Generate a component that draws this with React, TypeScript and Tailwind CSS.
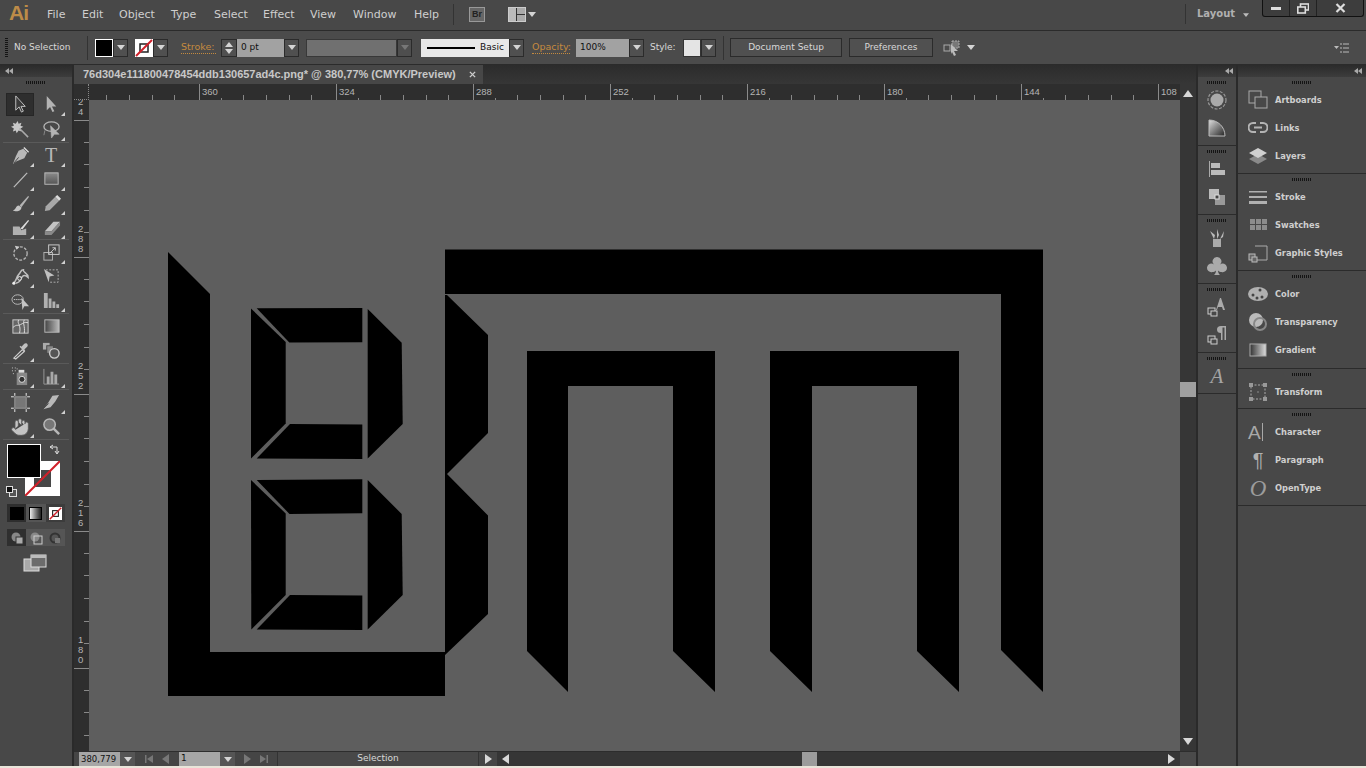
import type { ReactNode } from 'react'
import { Hand } from 'lucide-react'

const UI = 'font-["DejaVu_Sans",sans-serif]'

function Caret({ color = '#d4d4d4' }: { color?: string }) {
  return (
    <svg viewBox="0 0 8 5" className="w-2 h-[5px]">
      <path d="M0 0h8L4 5z" fill={color} />
    </svg>
  )
}

function Grip({ className = '' }: { className?: string }) {
  return <div className={`w-5 h-[3px] bg-[repeating-linear-gradient(90deg,#141414_0_1px,transparent_1px_2px)] ${className}`} />
}

function DropBtn() {
  return (
    <div className="w-[15px] h-[18px] shrink-0 flex items-center justify-center bg-[#505050] border border-[#2b2b2b]">
      <Caret />
    </div>
  )
}

function VDivider({ className = '' }: { className?: string }) {
  return <div className={`w-px bg-[#333] ${className}`} />
}

function OrangeLabel({ children, className = '' }: { children: ReactNode; className?: string }) {
  return <span className={`text-[9.5px] text-[#c48a3f] border-b border-dotted border-[#c48a3f] leading-[12px] ${className}`}>{children}</span>
}

function NoneSwatch({ className = '' }: { className?: string }) {
  return (
    <svg viewBox="0 0 18 18" className={className}>
      <rect width="18" height="18" fill="#fff" />
      <rect x="5" y="5" width="8" height="8" fill="none" stroke="#222" strokeWidth="1.5" />
      <path d="M1 17L17 1" stroke="#d0202a" strokeWidth="2" />
    </svg>
  )
}

function ControlBar() {
  return (
    <div className="h-[35px] flex items-center bg-[#4b4b4b] border-y border-[#2b2b2b] text-[#d8d8d8] text-[9px]">
      <div className="ml-[5px] w-[3px] h-[19px] bg-[repeating-linear-gradient(180deg,#141414_0_1px,transparent_1px_2px)]" />
      <span className="ml-[6px] w-[73px]">No Selection</span>
      <VDivider className="h-6" />
      <div className="ml-[7px] w-[18px] h-[18px] border border-white bg-black" />
      <DropBtn />
      <NoneSwatch className="ml-[7px] w-[18px] h-[18px]" />
      <DropBtn />
      <OrangeLabel className="ml-[13px] w-[35px]">Stroke:</OrangeLabel>
      <div className="ml-[5px] w-[16px] h-[18px] flex flex-col items-center justify-center gap-[2px] bg-[#505050] border border-[#2b2b2b]">
        <svg viewBox="0 0 8 5" className="w-2 h-[5px]"><path d="M0 5h8L4 0z" fill="#d4d4d4" /></svg>
        <Caret />
      </div>
      <div className="w-[47px] h-[18px] pl-[4px] flex items-center bg-[#a2a2a2] text-[#111]">0 pt</div>
      <DropBtn />
      <div className="ml-[7px] w-[91px] h-[18px] bg-[#707070] border border-[#383838]" />
      <div className="w-[15px] h-[18px] flex items-center justify-center bg-[#4e4e4e] border border-[#2b2b2b]"><Caret color="#777" /></div>
      <div className="ml-[9px] w-[88px] h-[18px] flex items-center bg-[#e8e8e8] text-[#111]">
        <div className="ml-[6px] w-[48px] h-[2px] bg-black" />
        <span className="ml-[5px]">Basic</span>
      </div>
      <DropBtn />
      <OrangeLabel className="ml-[8px] w-[38px]">Opacity:</OrangeLabel>
      <div className="ml-[6px] w-[53px] h-[18px] pl-[4px] flex items-center bg-[#a2a2a2] text-[#111]">100%</div>
      <DropBtn />
      <span className="ml-[6px] w-[33px]">Style:</span>
      <div className="w-[18px] h-[18px] bg-[#e4e4e4] border border-[#333]" />
      <DropBtn />
      <VDivider className="ml-[7px] h-6" />
      <div className="ml-[6px] w-[112px] h-[19px] flex items-center justify-center bg-[#505050] border border-[#2b2b2b]">Document Setup</div>
      <div className="ml-[7px] w-[84px] h-[19px] flex items-center justify-center bg-[#505050] border border-[#2b2b2b]">Preferences</div>
      <svg viewBox="0 0 18 16" className="ml-[10px] w-[18px] h-4">
        <rect x="1" y="5" width="6" height="6" fill="none" stroke="#aaa" />
        <rect x="9" y="1" width="7" height="7" fill="#777" stroke="#aaa" strokeDasharray="2 1" />
        <path d="M8 4l7 7h-4l2 4-2 1-2-4-1 2z" fill="#bbb" />
      </svg>
      <div className="ml-[6px]"><Caret /></div>
      <svg viewBox="0 0 15 10" className="ml-auto mr-[17px] w-[15px] h-[10px]">
        <path d="M0 3h5L2.5 6z" fill="#bbb" />
        <path d="M6 1h2M6 5h2M6 9h2M9 1h6M9 5h6M9 9h6" stroke="#bbb" />
      </svg>
    </div>
  )
}

function MenuBar() {
  const items = [
    { label: 'File', w: 'w-[35px]' },
    { label: 'Edit', w: 'w-[37px]' },
    { label: 'Object', w: 'w-[52px]' },
    { label: 'Type', w: 'w-[43px]' },
    { label: 'Select', w: 'w-[49px]' },
    { label: 'Effect', w: 'w-[47px]' },
    { label: 'View', w: 'w-[43px]' },
    { label: 'Window', w: 'w-[61px]' },
    { label: 'Help', w: 'w-[39px]' },
  ]
  return (
    <div className="h-[30px] flex items-start bg-[#484848] text-[11px] text-[#cfcfcf]">
      <span className='ml-[9px] w-[38px] h-[26px] flex items-center text-[21px] font-bold tracking-[-1px] text-[#bd8c48] font-["Liberation_Sans",sans-serif]'>Ai</span>
      {items.map((item) => (
        <span key={item.label} className={`${item.w} h-[30px] leading-[30px]`}>{item.label}</span>
      ))}
      <VDivider className="mt-1 h-[21px]" />
      <div className='ml-[15px] mt-[7px] w-4 h-[15px] flex items-center justify-center bg-[#666] border border-[#999] text-[9px] font-bold text-[#222] font-["Liberation_Sans",sans-serif]'>Br</div>
      <div className="ml-[23px] mt-[7px] w-[18px] h-[15px] flex border border-[#ccc] bg-[#aaa]">
        <div className="w-[8px] h-full border-r border-[#333] bg-[#bbb]" />
        <div className="flex-1 flex flex-col">
          <div className="flex-1 border-b border-[#333]" />
          <div className="flex-1" />
        </div>
      </div>
      <div className="ml-[2px] mt-[12px]"><Caret /></div>
      <VDivider className="ml-[649px] mt-1 h-[20px]" />
      <span className="ml-[11px] w-[46px] h-[28px] leading-[28px] font-bold text-[10px] text-[#b0b0b0]">Layout</span>
      <div className="mt-[13px]"><svg viewBox="0 0 8 5" className="w-[6px] h-1"><path d="M0 0h8L4 5z" fill="#bbb" /></svg></div>
      <div className="ml-[13px] w-[102px] h-[17px] flex bg-[#3d3d3d] border-x border-b border-[#111] rounded-b-[3px]">
        <div className="w-[27px] flex items-center justify-center border-r border-[#222]"><div className="w-[10px] h-[3px] bg-[#ddd]" /></div>
        <div className="w-[27px] flex items-center justify-center border-r border-[#222]">
          <svg viewBox="0 0 12 11" className="w-3 h-[11px]">
            <rect x="3.5" y="1" width="8" height="6" fill="none" stroke="#ddd" strokeWidth="1.6" />
            <rect x="0.8" y="4" width="7.5" height="6" fill="#3d3d3d" stroke="#ddd" strokeWidth="1.6" />
          </svg>
        </div>
        <div className="flex-1 flex items-center justify-center">
          <svg viewBox="0 0 10 10" className="w-[11px] h-[10px]"><path d="M1 1l8 8M9 1l-8 8" stroke="#ddd" strokeWidth="2.2" /></svg>
        </div>
      </div>
    </div>
  )
}

const toolIcons: Record<string, ReactNode> = {
  select: <path d="M5 1v15l3.5-3.5L11 18l2-1-2.5-5H15z" fill="#3a3a3a" stroke="#c4c4c4" />,
  direct: <path d="M5 1v15l3.5-3.5L11 18l2-1-2.5-5H15z" fill="#b4b4b4" />,
  wand: <><path d="M7 1l1 3 3-1-1 3 3 1-3 2 1 3-3-1-2 3-1-3-3 1 1-3-3-2 3-1-1-3 3 1z" fill="#c8c8c8" /><path d="M9 9l9 9" stroke="#aaa" strokeWidth="1.6" /></>,
  lasso: <><ellipse cx="10" cy="7" rx="8" ry="5" fill="none" stroke="#b4b4b4" strokeWidth="1.4" /><path d="M3 11l-1 5M9 6l9 9h-5l-3 4z" fill="#b4b4b4" stroke="#b4b4b4" strokeWidth="0.6" /></>,
  pen: <><path d="M13 3l4 4-3 6-8 3-4 3 3-8 3-6z" fill="#b8b8b8" /><path d="M14 1l5 5-1 1-5-5z" fill="#ddd" /><path d="M3 18l5-6" stroke="#444" /></>,
  line: <path d="M3 18L17 3" stroke="#bcbcbc" strokeWidth="1.3" />,
  rect: <><defs><linearGradient id="rg" x1="0" y1="0" x2="0" y2="1"><stop offset="0" stopColor="#8a8a8a" /><stop offset="1" stopColor="#555" /></linearGradient></defs><rect x="3" y="3" width="14" height="12" fill="url(#rg)" stroke="#bbb" /></>,
  brush: <><path d="M18 2L9 12l2 2L19 3z" fill="#b4b4b4" /><path d="M8 12c-3 0-3 5-6 5 2 2 9 2 9-3z" fill="#c4c4c4" /></>,
  pencil: <><path d="M14 3l4 4-10 10-5 1 1-5z" fill="#a8a8a8" /><path d="M14 3l2-2 4 4-2 2z" fill="#ddd" /></>,
  blob: <><path d="M2 9h7l2 4 5-2v7H2z" fill="#b0b0b0" /><path d="M10 11l8-9 1 1-7 9z" fill="#ddd" /></>,
  eraser: <><path d="M3 14l9-10h7l-9 10z" fill="#c4c4c4" /><path d="M3 14h7v4H3zM10 14l9-10v4l-9 10z" fill="#8a8a8a" /></>,
  rotate: <><circle cx="10" cy="11" r="7" fill="none" stroke="#b4b4b4" strokeWidth="1.4" strokeDasharray="3 1.6" /><path d="M4 3l5 1-3 3z" fill="#ccc" /></>,
  scale: <><rect x="2" y="10" width="9" height="8" fill="none" stroke="#b4b4b4" /><rect x="7" y="2" width="11" height="10" fill="none" stroke="#ccc" /><path d="M8 11l6-6M11 5h3v3" fill="none" stroke="#ccc" /></>,
  warp: <><path d="M2 17c4-1 3-6 6-9s2-5 5-5c-1 3 5 3 5 8-2-2-4-3-6-1s-1 6-7 7" fill="none" stroke="#c0c0c0" strokeWidth="1.6" /><circle cx="9" cy="12" r="2" fill="#555" stroke="#eee" /><circle cx="3" cy="17" r="1.6" fill="#eee" /></>,
  free: <><path d="M4 3h13v13H8" fill="none" stroke="#b0b0b0" strokeDasharray="2 1.6" /><path d="M2 2l11 7-5 1-1 6z" fill="#c0c0c0" /></>,
  shape: <><ellipse cx="7" cy="9" rx="6" ry="5" fill="none" stroke="#bbb" /><path d="M3 9h9" stroke="#eee" strokeDasharray="1 1" /><path d="M11 7l8 9h-5l-2 4z" fill="#c4c4c4" /></>,
  graph: <path d="M2 2h4v16H2zM7 8h3v10H7zM11 11h3v7h-3zM15 14h3v4h-3z" fill="#b0b0b0" />,
  mesh: <><rect x="2" y="3" width="16" height="14" fill="#666" stroke="#ccc" /><path d="M2 11c5-4 4-1 8-3s4-3 8-2M8 3c-2 4 3 5 1 14M14 3c-2 4 1 6 0 14" fill="none" stroke="#ddd" /></>,
  gradient: <><defs><linearGradient id="gg"><stop offset="0" stopColor="#444" /><stop offset="1" stopColor="#bbb" /></linearGradient></defs><rect x="3" y="3" width="15" height="13" fill="url(#gg)" stroke="#bbb" /></>,
  dropper: <><path d="M3 18l9-9 2 2-9 8z" fill="none" stroke="#ccc" strokeWidth="1.3" /><path d="M11 6l3-3c2-2 5 1 3 3l-3 3 1 1-1 1-5-5 1-1z" fill="#c0c0c0" /></>,
  blend: <><rect x="1" y="2" width="7" height="7" fill="#aaa" /><rect x="5" y="5" width="7" height="8" fill="#888" stroke="#444" /><circle cx="13" cy="13" r="5" fill="#555" stroke="#ccc" strokeWidth="1.5" /></>,
  spray: <><rect x="6" y="6" width="11" height="13" fill="#888" /><circle cx="11.5" cy="13" r="3.2" fill="#333" stroke="#ddd" /><rect x="8" y="3" width="6" height="3" fill="#ddd" /><path d="M1 1h1M4 1h1M1 4h1M4 4h1M2 7h1M6 2h1" stroke="#ccc" /></>,
  column: <><path d="M2 2v16h16" fill="none" stroke="#999" /><path d="M5 10h3v8H5zM9 5h3v13H9zM13 8h3v10h-3z" fill="#a8a8a8" /></>,
  artboard: <><rect x="4" y="4" width="12" height="12" fill="#777" stroke="#999" /><path d="M0 4h3M17 4h3M0 16h3M17 16h3M4 0v3M4 17v3M16 0v3M16 17v3" stroke="#eee" /></>,
  slice: <><path d="M18 2l-7 1-5 8-5 6 8-2 5-6z" fill="#b8b8b8" /><path d="M1 17l6-6" stroke="#444" /></>,
  hand: null,
  zoom: <><circle cx="8" cy="8" r="6" fill="#777" stroke="#b8b8b8" strokeWidth="1.6" /><path d="M12 12l6 6" stroke="#b8b8b8" strokeWidth="2.6" /></>,
}

function ToolCell({ name, flyout = true, active = false }: { name: string; flyout?: boolean; active?: boolean }) {
  return (
    <div className={`relative w-[28px] h-[23px] flex items-center justify-center ${active ? 'bg-[#2e2e2e] border border-[#262626]' : ''}`}>
      {name === 'type' ? (
        <span className='text-[20px] leading-none text-[#b8b8b8] font-["Liberation_Serif",serif]'>T</span>
      ) : name === 'hand' ? (
        <Hand className="w-5 h-5 text-[#555]" fill="#c4c4c4" strokeWidth={1} />
      ) : (
        <svg viewBox="0 0 20 20" className="w-[19px] h-[19px]">{toolIcons[name]}</svg>
      )}
      {flyout && !active && <div className="absolute right-0 bottom-0 w-0 h-0 border-l-[4px] border-l-transparent border-b-[4px] border-b-[#d0d0d0]" />}
    </div>
  )
}

function ToolGroup({ rows, className }: { rows: [string, string][]; className: string }) {
  const noFlyout = ['wand', 'free', 'mesh', 'gradient', 'blend', 'artboard', 'zoom', 'select']
  return (
    <div className={`${className} flex flex-col justify-around border-b border-[#5a5a5a] mx-[3px] box-content`}>
      {rows.map(([a, b]) => (
        <div key={a} className="flex justify-between pl-[3px] pr-[4px]">
          <ToolCell name={a} flyout={!noFlyout.includes(a)} active={a === 'select'} />
          <ToolCell name={b} flyout={!noFlyout.includes(b)} />
        </div>
      ))}
    </div>
  )
}

function ModeCell({ children, className = '' }: { children: ReactNode; className?: string }) {
  return <div className={`flex-1 flex items-center justify-center ${className}`}>{children}</div>
}

function DockHeader({ className = '' }: { className?: string }) {
  return (
    <div className={`h-[12px] flex items-center bg-gradient-to-b from-[#2b2b2b] to-[#3c3c3c] ${className}`}>
      <svg viewBox="0 0 8 6" className="w-2 h-[6px] shrink-0">
        <path d="M4 0v6L0 3zM8 0v6L4 3z" fill="#aaa" />
      </svg>
    </div>
  )
}

function LeftToolbar() {
  return (
    <div className="w-[74px] shrink-0 flex flex-col bg-[#484848] border-r-2 border-[#2a2a2a]">
      <DockHeader className="pl-[5px]" />
      <div className="h-[15px] pt-[4px] flex justify-center"><Grip /></div>
      <ToolGroup className="h-[50px]" rows={[['select', 'direct'], ['wand', 'lasso']]} />
      <ToolGroup className="h-[96px]" rows={[['pen', 'type'], ['line', 'rect'], ['brush', 'pencil'], ['blob', 'eraser']]} />
      <ToolGroup className="h-[73px]" rows={[['rotate', 'scale'], ['warp', 'free'], ['shape', 'graph']]} />
      <ToolGroup className="h-[49px]" rows={[['mesh', 'gradient'], ['dropper', 'blend']]} />
      <ToolGroup className="h-[25px]" rows={[['spray', 'column']]} />
      <ToolGroup className="h-[49px]" rows={[['artboard', 'slice'], ['hand', 'zoom']]} />

      <div className="relative h-[60px] mt-[4px] mx-[6px]">
        <div className="absolute left-[19px] top-[17px] w-[35px] h-[35px] bg-white">
          <div className="absolute left-[9px] top-[9px] w-[17px] h-[17px] bg-[#474747]" />
          <svg viewBox="0 0 35 35" className="absolute inset-0 w-[35px] h-[35px]"><path d="M0 35L35 0" stroke="#d0202a" strokeWidth="2" /></svg>
        </div>
        <div className="absolute left-[1px] top-0 w-[34px] h-[34px] bg-black border border-white" />
        <svg viewBox="0 0 12 12" className="absolute left-[43px] top-0 w-[12px] h-[12px]">
          <path d="M1 3h7v6M1 3l3-2M1 3l3 2M8 10l-2-3M8 10l2-3" fill="none" stroke="#ddd" />
        </svg>
        <div className="absolute left-0 top-[42px] w-[11px] h-[11px]">
          <div className="absolute right-0 bottom-0 w-[8px] h-[8px] bg-[#555] border border-[#ddd]" />
          <div className="absolute left-0 top-0 w-[7px] h-[7px] bg-[#111] border border-[#ddd]" />
        </div>
      </div>

      <div className="mx-[7px] h-[18px] flex bg-[#333]">
        <ModeCell className="bg-[#2e2e2e]"><div className="w-[14px] h-[13px] bg-black" /></ModeCell>
        <ModeCell className="bg-[#555]"><div className="w-[13px] h-[13px] border border-black bg-gradient-to-r from-[#eee] to-[#222]" /></ModeCell>
        <ModeCell className="bg-[#3c3c3c]"><NoneSwatch className="w-[13px] h-[13px]" /></ModeCell>
      </div>
      <div className="mx-[7px] mt-[7px] h-[17px] flex bg-[#333]">
        <ModeCell className="bg-[#2f2f2f]">
          <svg viewBox="0 0 14 14" className="w-[14px] h-[14px]"><circle cx="6" cy="6" r="4.5" fill="#888" /><rect x="6" y="6" width="7" height="7" fill="#aaa" stroke="#333" /></svg>
        </ModeCell>
        <ModeCell className="bg-[#555]">
          <svg viewBox="0 0 14 14" className="w-[14px] h-[14px]"><circle cx="6" cy="6" r="4.5" fill="#888" /><rect x="5" y="5" width="8" height="8" fill="none" stroke="#ccc" /></svg>
        </ModeCell>
        <ModeCell className="bg-[#555]">
          <svg viewBox="0 0 14 14" className="w-[14px] h-[14px]"><circle cx="7" cy="7" r="4.5" fill="none" stroke="#333" strokeWidth="2" /><rect x="7" y="7" width="5" height="5" fill="#777" /></svg>
        </ModeCell>
      </div>
      <div className="mt-[8px] ml-[23px]">
        <svg viewBox="0 0 24 18" className="w-6 h-[18px]">
          <rect x="1" y="5" width="15" height="12" fill="#a8a8a8" stroke="#ddd" />
          <rect x="8" y="1" width="15" height="12" fill="#6c6c6c" stroke="#ddd" />
          <rect x="8" y="1" width="15" height="3" fill="#bbb" />
        </svg>
      </div>
    </div>
  )
}

function HRulerCell({ label }: { label: string }) {
  return (
    <div className="relative w-[137px] shrink-0 h-full grid grid-cols-6 border-l border-[#8a8a8a]">
      <span className='absolute left-[2px] top-[2px] text-[9.5px] leading-[12px] text-[#b4b4b4] font-["Liberation_Sans",sans-serif]'>{label}</span>
      {[0, 1, 2, 3, 4, 5].map((i) => (
        <div key={i} className="flex items-end justify-end pr-px">
          {i < 5 && <div className={`w-px bg-[#888] ${i === 0 ? 'h-[2px]' : 'h-[5px]'}`} />}
        </div>
      ))}
    </div>
  )
}

function VRulerCell({ label }: { label: string }) {
  return (
    <div className="relative h-[137px] shrink-0 grid grid-rows-6 border-b border-[#8a8a8a]">
      <div className='absolute left-[4px] bottom-[3px] flex flex-col text-[9.5px] leading-[10px] text-[#b4b4b4] font-["Liberation_Sans",sans-serif]'>
        {label.split('').map((d, i) => <span key={i}>{d}</span>)}
      </div>
      {[0, 1, 2, 3, 4, 5].map((i) => (
        <div key={i} className="flex flex-col justify-end items-end pb-px">
          {i < 5 && <div className="h-px w-[5px] bg-[#888]" />}
        </div>
      ))}
    </div>
  )
}

function Logo() {
  const polys = [
    '168,252 210,294 210,652 445,652 445,696 168,696',
    '445,249.5 1043,249.5 1043,692 1001,650 1001,294 445,294',
    '445,295 447,295 488,335 488,433 447,474 488,515.5 488,614 445,655',
    '251,308.5 285.7,342 285.7,423.5 251,458.5',
    '256.7,308.3 362.3,308 362.3,342.3 289.3,342.6',
    '290,424 362.3,424.5 362.3,459 256.7,458.5',
    '367.7,309 401.7,342.7 402.7,424 367.7,458.5',
    '251,480 285.7,513.5 285.7,595 251.3,629.5',
    '256.7,480 362.3,479.3 362.3,513.3 289.5,514',
    '290,595 362.3,595.5 362.3,630 256.7,629.5',
    '367.7,480 401.7,514 402.7,595 367.7,629.5',
    '527,351 715,351 715,692 673,651 673,386 568,386 568,692 527,651',
    '770,351 959,351 959,692 917,651 917,386 812,386 812,692 770,651',
  ]
  return (
    <svg viewBox="89 100 1091 651" className="block w-[1091px] h-[651px]">
      {polys.map((p) => <polygon key={p} points={p} fill="#000" />)}
    </svg>
  )
}

function Arrow({ dir, color = '#d8d8d8' }: { dir: 'up' | 'down' | 'left' | 'right'; color?: string }) {
  const d = { up: 'M0 7h10L5 0z', down: 'M0 0h10L5 7z', left: 'M7 0v10L0 5z', right: 'M0 0v10l7-5z' }[dir]
  const size = dir === 'up' || dir === 'down' ? 'w-[10px] h-[7px]' : 'w-[7px] h-[10px]'
  const box = dir === 'up' || dir === 'down' ? '0 0 10 7' : '0 0 7 10'
  return <svg viewBox={box} className={size}><path d={d} fill={color} /></svg>
}

function StatusBar() {
  return (
    <div className="h-[15px] flex items-stretch bg-[#454545] border-t border-[#2d2d2d] text-[9px] text-[#d8d8d8]">
      <div className="ml-[5px] w-[41px] pl-[2px] flex items-center bg-[#a6a6a6] text-[#111] text-[8.5px]">380,779</div>
      <div className="w-[15px] flex items-center justify-center bg-[#555]"><Caret /></div>
      <div className="w-[44px] flex items-center justify-center gap-[9px]">
        <svg viewBox="0 0 8 8" className="w-2 h-2"><path d="M0 0h1.5v8H0zM8 0v8L2 4z" fill="#777" /></svg>
        <Arrow dir="left" color="#777" />
      </div>
      <div className="w-[41px] pl-[2px] flex items-center bg-[#a6a6a6] text-[#111]">1</div>
      <div className="w-[15px] flex items-center justify-center bg-[#555]"><Caret /></div>
      <div className="w-[43px] flex items-center justify-center gap-[9px] border-r border-[#333]">
        <Arrow dir="right" color="#777" />
        <svg viewBox="0 0 8 8" className="w-2 h-2"><path d="M0 0v8l6-4zM6.5 0H8v8H6.5z" fill="#777" /></svg>
      </div>
      <div className="w-[200px] flex items-center justify-center bg-[#484848]">Selection</div>
      <div className="w-[19px] flex items-center justify-center border-l border-[#333]"><Arrow dir="right" /></div>
      <div className="flex-1 relative flex items-center justify-between px-[5px] bg-[#363636]">
        <Arrow dir="left" />
        <div className="absolute left-[305px] top-0 w-[15px] h-full bg-[#9c9c9c]" />
        <Arrow dir="right" />
      </div>
      <div className="w-[16px] bg-[#4a4a4a]" />
    </div>
  )
}

function DocArea() {
  return (
    <div className="flex-1 min-w-0 flex flex-col">
      <div className="h-[19px] flex bg-gradient-to-b from-[#2c2c2c] to-[#363636]">
        <div className='w-[409px] flex items-center justify-between pl-[9px] pr-[7px] bg-[#474747] text-[11px] font-bold text-[#c8c8c8] whitespace-nowrap font-["Liberation_Sans",sans-serif]'>
          <span>76d304e111800478454ddb130657ad4c.png* @ 380,77% (CMYK/Preview)</span>
          <svg viewBox="0 0 8 8" className="w-[7px] h-[7px]"><path d="M1 1l6 6M7 1L1 7" stroke="#ccc" strokeWidth="1.6" /></svg>
        </div>
      </div>
      <div className="h-[16px] flex bg-[#2e2e2e] overflow-hidden">
        <div className="w-[15px] shrink-0 border-r border-b border-dotted border-[#888]" />
        <div className="flex-1 min-w-0 overflow-hidden flex">
          <div className="flex ml-[-27px]">
            {['', '360', '324', '288', '252', '216', '180', '144', '108'].map((l) => <HRulerCell key={l} label={l} />)}
          </div>
        </div>
        <div className="w-[16px] shrink-0 bg-[#363636] flex items-center justify-center pt-[3px]"><Arrow dir="up" /></div>
      </div>
      <div className="flex-1 min-h-0 flex">
        <div className="w-[15px] shrink-0 bg-[#2e2e2e] overflow-hidden">
          <div className="flex flex-col mt-[-116px]">
            {['24', '288', '252', '216', '180', ''].map((l) => <VRulerCell key={l} label={l} />)}
          </div>
        </div>
        <div className="w-[1091px] bg-[#5e5e5e] overflow-hidden"><Logo /></div>
        <div className="relative flex-1 bg-[#363636] flex items-end justify-center pb-[6px]">
          <div className="absolute left-0 right-0 top-[282px] h-[15px] bg-[#a0a0a0]" />
          <Arrow dir="down" />
        </div>
      </div>
      <StatusBar />
    </div>
  )
}

const panelIcons: Record<string, ReactNode> = {
  artboards: <><rect x="1" y="1" width="12" height="12" fill="none" stroke="#aaa" /><rect x="7" y="7" width="12" height="11" fill="#484848" stroke="#aaa" /></>,
  links: <path d="M8 5H5a4.5 4.5 0 000 9h3M12 5h3a4.5 4.5 0 010 9h-3M6 9.5h8" fill="none" stroke="#b4b4b4" strokeWidth="2" />,
  layers: <><path d="M10 8l9 5-9 5-9-5z" fill="#8a8a8a" /><path d="M10 2l9 5-9 5-9-5z" fill="#d0d0d0" /></>,
  stroke: <path d="M1 4h18v1.5H1zM1 9h18v2H1zM1 14h18v3H1z" fill="#b0b0b0" />,
  swatches: <path d="M2 4h5v5H2zM8 4h5v5H8zM14 4h5v5h-5zM2 10h5v5H2zM8 10h5v5H8zM14 10h5v5h-5z" fill="#8c8c8c" />,
  styles: <><path d="M7 3h12v14H8" fill="none" stroke="#aaa" /><rect x="1" y="11" width="6" height="6" fill="#666" stroke="#bbb" /><rect x="4" y="14" width="5" height="5" fill="#666" stroke="#bbb" /></>,
  color: <><ellipse cx="10" cy="10" rx="10" ry="7" fill="#b0b0b0" /><circle cx="5" cy="11" r="1.5" fill="#444" /><circle cx="9" cy="14" r="1.5" fill="#444" /><circle cx="14" cy="13" r="1.5" fill="#444" /><circle cx="12" cy="6" r="1.5" fill="#444" /></>,
  transparency: <><circle cx="8" cy="8" r="7" fill="#bbb" /><circle cx="12" cy="12" r="6" fill="none" stroke="#888" strokeWidth="2" /></>,
  gradient: <><defs><linearGradient id="pg"><stop offset="0" stopColor="#333" /><stop offset="1" stopColor="#ddd" /></linearGradient></defs><rect x="2" y="4" width="16" height="12" fill="url(#pg)" stroke="#aaa" /></>,
  transform: <><rect x="3" y="3" width="14" height="14" fill="none" stroke="#aaa" strokeDasharray="2 1.5" /><path d="M1 1h4v4H1zM15 1h4v4h-4zM1 15h4v4H1zM15 15h4v4h-4z" fill="#999" /><rect x="9.5" y="9.5" width="1" height="1" fill="#ccc" /></>,
  align: <><path d="M2 2h1v16H2z" fill="#aaa" /><path d="M4 4h9v5H4z" fill="#bbb" /><path d="M4 11h14v5H4z" fill="#bbb" /></>,
  pathfinder: <><rect x="2" y="2" width="10" height="10" fill="#bbb" /><rect x="8" y="8" width="10" height="10" fill="#999" /><rect x="8" y="8" width="4" height="4" fill="#444" stroke="#ddd" /></>,
  guide: <><circle cx="10" cy="10" r="9" fill="none" stroke="#999" strokeWidth="1.2" strokeDasharray="3 1.5" /><circle cx="10" cy="10" r="6.5" fill="#aaa" /></>,
  wheel: <><defs><linearGradient id="wg" x1="0" y1="0" x2="1" y2="1"><stop offset="0" stopColor="#ddd" /><stop offset="1" stopColor="#222" /></linearGradient></defs><path d="M2 2c9 0 16 7 16 16H2z" fill="url(#wg)" stroke="#bbb" /></>,
  brushes: <><rect x="6" y="11" width="8" height="8" fill="#aaa" /><path d="M7 11L3 3l5 4zM10 11V1l2 6zM13 11l4-8-1 6z" fill="#bbb" /></>,
  club: <path d="M10 1a4.3 4.3 0 00-3 7.5A4.3 4.3 0 105.500 16c1 0 2.500-.5 3.500-1.500 0 2-1 3.500-2 4.500h6c-1-1-2-2.500-2-4.500 1 1 2.500 1.500 3.500 1.500A4.300 4.300 0 1013 8.500 4.300 4.300 0 0010 1z" fill="#aaa" />,
  charStyles: <><path d="M9 13L13 1h1l4 12h-2l-1-3h-4l-1 3z" fill="#aaa" /><rect x="1" y="11" width="7" height="6" fill="none" stroke="#ccc" /><rect x="4" y="14" width="6" height="5" fill="#484848" stroke="#ccc" /></>,
  paraStyles: <><path d="M14 1h5v14h-1.5V2.500h-2V15H14V8a4 3.500 0 010-7z" fill="#aaa" /><rect x="1" y="11" width="7" height="6" fill="none" stroke="#ccc" /><rect x="4" y="14" width="6" height="5" fill="#484848" stroke="#ccc" /></>,
}

function PanelGlyph({ name }: { name: string }) {
  if (name === 'character') {
    return (
      <div className="w-5 h-5 flex items-center">
        <span className='text-[19px] leading-none text-[#a8a8a8] font-["Liberation_Sans",sans-serif]'>A</span>
        <div className="ml-[1px] w-px h-[18px] bg-[#a8a8a8]" />
      </div>
    )
  }
  if (name === 'paragraph') {
    return <span className='w-5 text-[20px] leading-none text-center text-[#b0b0b0] font-["Liberation_Sans",sans-serif]'>¶</span>
  }
  if (name === 'opentype') {
    return <span className='w-5 text-[23px] leading-none text-center italic text-[#9c9c9c] font-["Liberation_Serif",serif]'>O</span>
  }
  if (name === 'glyphs') {
    return <span className='w-5 text-[21px] leading-none text-center italic text-[#a4a4a4] font-["Liberation_Serif",serif]'>A</span>
  }
  return <svg viewBox="0 0 20 20" className="w-5 h-5">{panelIcons[name]}</svg>
}

function NarrowGroup({ icons }: { icons: string[] }) {
  return (
    <div className="flex flex-col items-center pb-[3px] border-b border-[#2b2b2b]">
      <div className="h-[9px] pt-[4px] flex justify-center"><Grip /></div>
      {icons.map((n) => (
        <div key={n} className="h-[28px] flex items-center justify-center"><PanelGlyph name={n} /></div>
      ))}
    </div>
  )
}

function WideGroup({ items, pad = 'pb-[3px]' }: { items: [string, string][]; pad?: string }) {
  return (
    <div className={`${pad} border-b border-[#2b2b2b]`}>
      <div className="h-[9px] pt-[4px] flex justify-center"><Grip /></div>
      {items.map(([n, label]) => (
        <div key={n} className="h-[28px] pl-[10px] flex items-center">
          <PanelGlyph name={n} />
          <span className="ml-[7px] pt-px text-[8.3px] font-bold text-[#cfcfcf]">{label}</span>
        </div>
      ))}
    </div>
  )
}

function RightDock() {
  return (
    <div className="w-[170px] shrink-0 flex bg-[#484848]">
      <div className="w-[42px] flex flex-col border-x-2 border-[#2a2a2a]">
        <DockHeader className="justify-end pr-[3px]" />
        <NarrowGroup icons={['guide', 'wheel']} />
        <NarrowGroup icons={['align', 'pathfinder']} />
        <NarrowGroup icons={['brushes', 'club']} />
        <NarrowGroup icons={['charStyles', 'paraStyles']} />
        <NarrowGroup icons={['glyphs']} />
      </div>
      <div className="flex-1 flex flex-col">
        <DockHeader className="justify-end pr-[4px]" />
        <WideGroup items={[['artboards', 'Artboards'], ['links', 'Links'], ['layers', 'Layers']]} />
        <WideGroup items={[['stroke', 'Stroke'], ['swatches', 'Swatches'], ['styles', 'Graphic Styles']]} />
        <WideGroup items={[['color', 'Color'], ['transparency', 'Transparency'], ['gradient', 'Gradient']]} pad="pb-[4px]" />
        <WideGroup items={[['transform', 'Transform']]} pad="pb-[2px]" />
        <WideGroup items={[['character', 'Character'], ['paragraph', 'Paragraph'], ['opentype', 'OpenType']]} />
      </div>
    </div>
  )
}

export default function App() {
  return (
    <div className={`w-[1366px] h-[768px] flex flex-col overflow-hidden bg-[#484848] ${UI}`}>
      <MenuBar />
      <ControlBar />
      <div className="flex-1 min-h-0 flex">
        <LeftToolbar />
        <DocArea />
        <RightDock />
      </div>
      <div className="h-[2px] bg-[#e9e5da]" />
    </div>
  )
}
